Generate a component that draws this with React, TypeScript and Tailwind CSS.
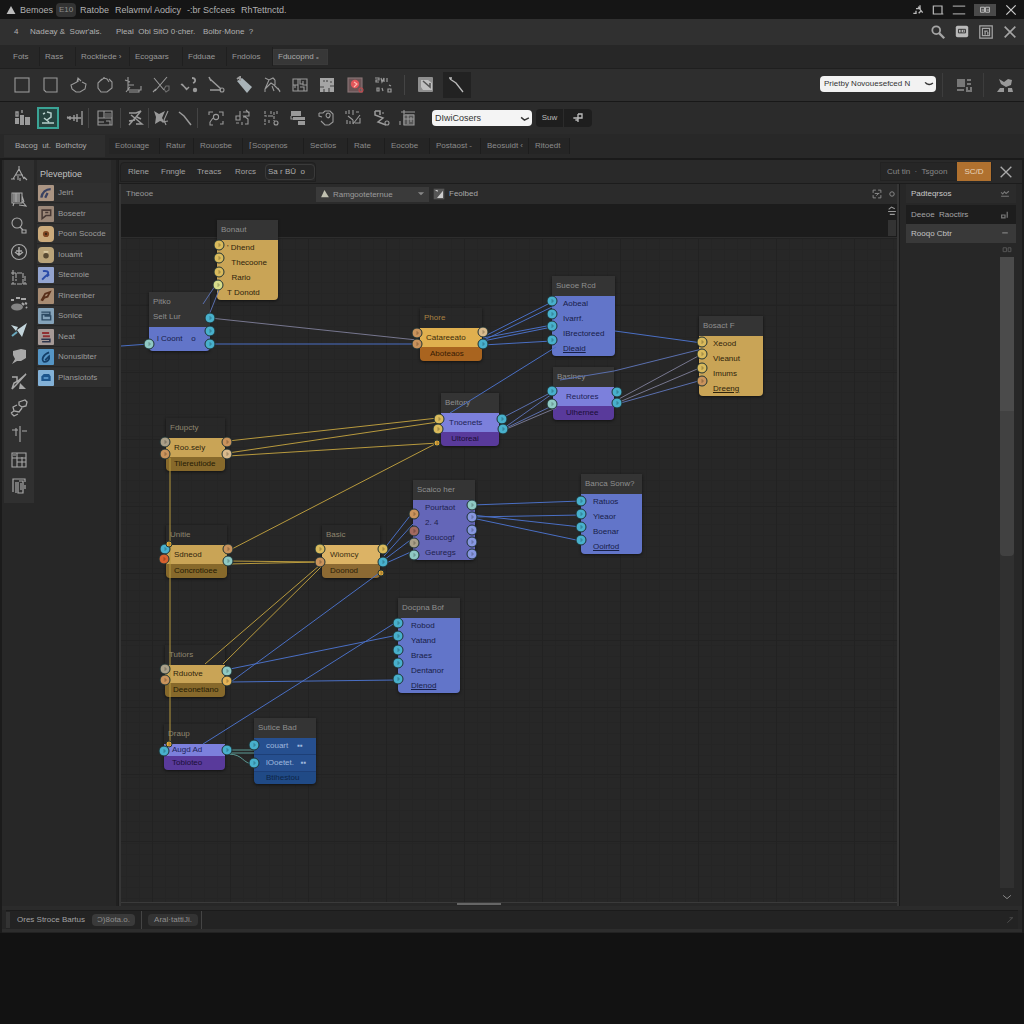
import React from "react";
import type { ReactNode } from "react";

/* ---------- icons ---------- */

function Glyph({ children, className = "size-[18px] text-[#9a9a9a]" }: { children: ReactNode; className?: string }) {
  return (
    <svg viewBox="0 0 18 18" className={className} fill="none" stroke="currentColor" strokeWidth="1.1" aria-hidden="true">
      {children}
    </svg>
  );
}

const f = { fill: "currentColor", stroke: "none" };

const drawTools: { name: string; art: ReactNode }[] = [
  { name: "Rectangle", art: <rect x="2" y="2" width="14" height="14" /> },
  { name: "Page", art: <path d="M3 2h13v14H5l-2-2z" /> },
  { name: "Lasso", art: <path d="M8 6 2 9l1 4 4 3h4l5-3 1-5-4-2M8 6l1-4 3 3M9 2v4" /> },
  { name: "Circle", art: <><path d="M6 3 2 7v5l3 4h6l5-4V6l-3-3M4 5l4-3 3 1 2 3" /><path d="M8 1v2" /></> },
  { name: "Crop", art: <path d="M4 1v13h13v-4M1 4l5 2M4 9h6M2 16l4-5M7 14h8v2H5" /> },
  { name: "Cut", art: <><path d="M2 2l10 12M15 1 3 15M1 16l3-3" /><path d="M14 10h3v4l-3 2-2-3z" opacity=".6" /></> },
  { name: "Curve", art: <><path d="M12 2c4 0 4 4 1 5" strokeWidth="1.8" /><path d="M1 8l6 5 2-2M2 8l5 6" strokeWidth="1.4" /><circle cx="15" cy="14" r="2.2" {...f} /></> },
  { name: "Scissors", art: <><path d="M3 3l11 10M2 1l2 4M3 14h11" strokeWidth="1.6" /><circle cx="15" cy="14" r="2" /></> },
  { name: "Eraser", art: <><path d="M2 5l5-3 10 9-5 6z" fill="#a9b3b8" stroke="none" /><path d="M2 3l3-2v4" strokeWidth="2" /></> },
  { name: "Path", art: <path d="M2 2l4 2 4-2 2 2M6 4l-4 9 6-6 3 2 6 6M2 13v3M12 4v5M9 10l2 5M15 12l2 4" /> },
  { name: "Layout", art: <path d="M2 3h14v12H2zM7 3v12M12 5v4h4M2 9h5M9 3v5h3M9 11h4v4M4 9v3" /> },
  { name: "Table", art: <><rect x="2" y="2" width="14" height="14" fill="#a5a5a5" stroke="none" /><path d="M2 11h4M6 13v3M11 12v4M5 5h2M9 4v2M12 6h2M12 10h4" stroke="#444" /></> },
  { name: "Record", art: <><rect x="2" y="2" width="14" height="14" fill="#6d5557" stroke="#8b7778" /><circle cx="9" cy="8" r="4.2" fill="#e2565a" stroke="none" /><path d="M8 6l3 2-3 3" stroke="#ffb9b0" /><circle cx="15" cy="14" r="2" stroke="#c0484c" /></> },
  { name: "Bitmap", art: <path d="M1 2h4v2H2v2h3M7 2l1 4 2-4v4M13 2v4M3 12h2v3H3zM8 12l1 3M14 13h3v3h-3zM15 9l2 1" strokeWidth="1.2" /> },
];

const editTools: Record<string, ReactNode> = {
  columns: <><path d="M2 9h4v6H2zM7 6h4v10H7zM12 8h5v8h-5z" {...f} /><path d="M3 3h2v4H3zM9 1v3" strokeWidth="1.4" /></>,
  link: <path d="M8 3l4 1v4l-4 3M5 9l5 4M3 14h12M4 5l2-1" stroke="#b7cfcb" strokeWidth="1.5" />,
  align: <path d="M1 9h14M4 7v4M8 6v6M11 5v8M16 2v14M1 8l3 1" strokeWidth="1.4" />,
  window: <><path d="M2 2h14v14H2zM2 9h14M8 2v7M10 12h4v4M2 13h6" /><path d="M9 4h6v4H9z" {...f} opacity=".4" /></>,
  node: <path d="M3 4h7l5-2-5 6-7 8M5 6l5 4 6 5h-6M3 12l6-1M11 8l4 2" strokeWidth="1.5" />,
  star: <><path d="M2 2l5 3 6-3-3 7 3 5-5-2-5 3 1-7z" {...f} /><path d="M16 2l-4 9 2 5M10 13l6-1" /></>,
  slash: <path d="M3 3l5 4 7 9" strokeWidth="1.5" />,
  select: <><path d="M2 6V3h4M12 3h4v4M16 12v3h-3M3 13v3h3" /><circle cx="9" cy="8" r="2.6" /><path d="M6 9l-3 4" /></>,
  refs: <path d="M6 2v9H2V7h4M9 3h6v4h-5l4 3v5h-3M2 14h3M8 13v3M12 1l3 3M9 8h3" />,
  split: <><path d="M3 2v5h3M9 2v4M3 10v6M7 11v4M12 3v9M15 2v3" strokeDasharray="3 1" /><circle cx="14" cy="14" r="2" /><path d="M6 7h5" /></>,
  print: <><path d="M2 2h10v5H2zM4 8h12v3H4zM9 12h7v4H9z" {...f} /><path d="M2 7v3h3" /></>,
  clock: <path d="M2 4h4l2-2h5l3 3v8l-4 3H8l-4-4M2 4v3l3 1M9 6c1-3 5-2 4 1s-4 2-4-1" />,
  measure: <path d="M2 2v3M5 1v4M9 1v5M12 3h3M4 7l5 4M16 6 9 15M3 11v4M6 12v3M9 11v4M11 14h5V9" />,
  route: <><path d="M3 2h5v4M3 2v4l8 3-5 4 8 3" strokeWidth="1.5" /><circle cx="15" cy="14" r="2" /><path d="M11 3v2" /></>,
  grid: <><path d="M4 5h11v11H4z" {...f} opacity=".4" /><path d="M2 3h14M5 1v4M5 6h10v10H5zM5 10h10M9 6v9M12 8v5M1 12v4" /></>,
};

const sideTools: { name: string; art: ReactNode }[] = [
  { name: "Shapes", art: <path d="M9 1v4M9 4 3 14M9 4l5 10M5 10h8M1 14h4M14 12l3 3M8 11v4M10 13v3" /> },
  { name: "Copy", art: <><path d="M3 2h7v9H3z" {...f} opacity=".7" /><path d="M2 2h10v10H2zM6 2v9M4 12l-1 3M12 10l4 5-7-1M12 5l2 6" /></> },
  { name: "Zoom", art: <><circle cx="7" cy="6" r="5" /><path d="M10 10l3 3M12 13h4v3h-4z" /></> },
  { name: "Orbit", art: <><circle cx="9" cy="9" r="7.5" /><path d="M9 4v9M5 9l4 3 4-3M6 8h6" strokeWidth="1.5" /></> },
  { name: "Bounds", art: <path d="M3 1v14h10V4H1M6 4v8M15 7v8M1 15h4M13 15h4" strokeDasharray="5 1" /> },
  { name: "Spray", art: <><ellipse cx="7" cy="12" rx="6" ry="3.5" fill="#858585" stroke="none" /><path d="M1 5h3M6 3h4M11 4h5M15 8l2 1M16 12l1 1M12 8l2 2" strokeWidth="2" /></> },
  { name: "Select", art: <><path d="M1 4l7 2-2 4zM7 9l10-7-5 14z" fill="#c3d5db" stroke="none" /><path d="M2 15l5-4" stroke="#6aa8bd" strokeWidth="2" /></> },
  { name: "Comment", art: <path d="M3 4l8-2 5 1v8l-5 3H7l-5 3 3-5-2-4z" {...f} /> },
  { name: "Brush", art: <><path d="M16 1 6 12l-4 4 2-6 4-2zM2 4h5v4" strokeWidth="1.5" /><path d="M10 10l6 6h-7z" {...f} /></> },
  { name: "Chain", art: <path d="M9 3l6-2 2 2-1 4-4 1-3-2zM7 6 3 8l1 4 5 1 3-4M1 14l3 3 4-2M4 12l-3 2" strokeWidth="1.3" /> },
  { name: "Center", art: <path d="M10 1v16M2 5h6M12 6h5M6 3v8" /> },
  { name: "Grid", art: <path d="M2 2h14v14H2zM2 7h14M7 2v14M12 6v10M7 11h9M3 4h3" /> },
  { name: "Device", art: <path d="M3 15V2h12v3M6 5v11M9 4h4v12H8V5M15 8v4M3 2v6M11 6v7" strokeWidth="1.2" /> },
];

/* ---------- small parts ---------- */

function IconButton({ label, children, className = "" }: { label: string; children: ReactNode; className?: string }) {
  return (
    <button type="button" aria-label={label} className={`flex items-center justify-center ${className}`}>
      {children}
    </button>
  );
}

const Rule = () => <span className="h-5 w-px bg-[#444]" />;

function TitleBar() {
  return (
    <header className="flex h-[19px] items-center bg-[#151515] px-1.5 text-[9px] text-[#b0b0b0]">
      <Glyph className="size-2.5 text-[#bdbdbd]"><path d="M9 2l8 14H1z" {...f} /></Glyph>
      <span className="ml-1 w-9">Bemoes</span>
      <span className="flex h-3.5 w-5 items-center justify-center rounded-sm bg-[#333] text-[8px] text-[#8d8d8d]">E10</span>
      <h1 className="ml-1 flex gap-1.5 whitespace-nowrap">
        <span>Ratobe</span><span>Relavmvl Aodicy</span><span>-:br Scfcees</span><span>RhTettnctd.</span>
      </h1>
      <div className="ml-auto flex items-center gap-2 text-[#bbb]">
        <IconButton label="Pin"><Glyph className="size-3"><path d="M2 14h4v-4M9 4l4 3M12 2v6l4 5M10 14l3-3M6 7h5" strokeWidth="2" /></Glyph></IconButton>
        <IconButton label="Restore"><Glyph className="size-3"><path d="M2 3h13v12H2zM12 15h5" strokeWidth="1.8" /></Glyph></IconButton>
        <IconButton label="Minimize"><Glyph className="size-3.5 text-[#999]"><path d="M1 4h16M1 14h16" strokeWidth="1.6" /></Glyph></IconButton>
        <IconButton label="Layout" className="h-3 w-[22px] bg-[#4a4a4a]"><Glyph className="h-2.5 w-3.5 text-[#bbb]"><path d="M1 4h7v9H1zM10 4h7v9h-7zM3 9h4M12 9h4" strokeWidth="1.8" /></Glyph></IconButton>
        <IconButton label="Close"><Glyph className="size-3.5 text-[#ccc]"><path d="M3 3l12 12M15 3L3 15" strokeWidth="1.6" /></Glyph></IconButton>
      </div>
    </header>
  );
}

function MenuBar() {
  return (
    <div className="flex h-[26px] items-center bg-[#303030] pr-1.5 pl-3.5 text-[8px] text-[#b0b0b0]">
      <span className="w-4">4</span>
      <nav className="flex whitespace-nowrap">
        <a href="#nodes" className="w-[86px]">Nadeay &amp; &nbsp;Sowr'als.</a>
        <a href="#panel" className="w-[87px]">Pleal &nbsp;Obi SitO 0·cher.</a>
        <a href="#mode">Bolbr·Mone &nbsp;?</a>
      </nav>
      <div className="ml-auto flex items-center gap-2">
        <IconButton label="Search"><Glyph className="size-4 text-[#a5a5a5]"><circle cx="7" cy="7" r="4.4" strokeWidth="2" /><path d="M10 10l6 6" strokeWidth="2.6" /></Glyph></IconButton>
        <IconButton label="Card"><Glyph className="size-4 text-[#b9b9b9]"><rect x="2" y="2" width="14" height="13" rx="2" {...f} /><path d="M5 6h8v4H5zM8 6v4M11 7v2" stroke="#333" /></Glyph></IconButton>
        <IconButton label="Frame"><Glyph className="size-4 text-[#a5a5a5]"><path d="M2 2h14v14H2zM5 5h8v8H5zM7 8h4M8 8v4M11 9v3" strokeWidth="1.4" /></Glyph></IconButton>
        <IconButton label="Close panel"><Glyph className="size-4 text-[#a5a5a5]"><path d="M3 3l12 12M15 3L3 15" strokeWidth="1.8" /></Glyph></IconButton>
      </div>
    </div>
  );
}

function MainTabs() {
  const tabs = [
    ["Fots", "w-8"], ["Rass", "w-9"], ["Rocktiede ›", "w-[54px]"], ["Ecogaars", "w-[53px]"],
    ["Fdduae", "w-11"], ["Fndoios", "w-[46px]"],
  ];
  return (
    <nav className="flex h-[23px] items-center bg-[#272727] pl-2 text-[8px] text-[#999]">
      {tabs.map(([t, w]) => (
        <button key={t} type="button" className={`${w} h-[19px] border-r border-[#1f1f1f] pl-[5px] text-left whitespace-nowrap`}>{t}</button>
      ))}
      <button type="button" className="h-4 w-[55px] border border-[#3a3a3a] bg-[#373737] pl-1 text-left text-[#aaa]">Fducopnd ₌</button>
    </nav>
  );
}

function DrawBar() {
  return (
    <div className="flex h-[34px] items-center border-y border-t-[#1f1f1f] border-b-[#181818] bg-[#2e2e2e]">
      <div className="ml-[13px] flex w-[379px] justify-between">
        {drawTools.map((t) => (
          <IconButton key={t.name} label={t.name}><Glyph>{t.art}</Glyph></IconButton>
        ))}
      </div>
      <span className="ml-3 h-5 w-px bg-[#444]" />
      <IconButton label="Shade" className="ml-3"><Glyph><rect x="1" y="1" width="15" height="15" rx="1" fill="#8f8f8f" stroke="none" /><path d="M4 4h7l4 3v7H6L4 11z" fill="#c0c0c0" stroke="none" /><path d="M6 5l7 6V7" stroke="#555" strokeWidth="1.6" /></Glyph></IconButton>
      <IconButton label="Line" className="ml-2 h-[26px] w-7 bg-[#222]"><Glyph className="size-[18px] text-[#bbb]"><path d="M2 3l6 4 7 9M1 2h3" strokeWidth="1.3" /></Glyph></IconButton>
      <label className="relative mt-1.5 ml-auto block self-start">
        <span className="sr-only">Preset</span>
        <select className="h-4 w-[116px] appearance-none rounded bg-[#f2f2f2] pr-3 pl-1 text-[8px] leading-4 text-[#333]">
          <option>Prietby Novouesefced N</option>
        </select>
        <Glyph className="pointer-events-none absolute top-1 right-0.5 size-2.5 text-[#333]"><path d="M2 6c4 5 10 5 14 1" strokeWidth="2.6" /></Glyph>
      </label>
      <span className="ml-1.5 h-6 w-px bg-[#3d3d3d]" />
      <IconButton label="Tiles" className="ml-3"><Glyph className="size-[18px] text-[#777]"><path d="M2 3h8v8H2z" {...f} /><path d="M12 4h4M12 8h4M2 14h7M12 11v4h4v-4" strokeWidth="2" /></Glyph></IconButton>
      <span className="ml-2.5 h-6 w-px bg-[#3d3d3d]" />
      <IconButton label="Users" className="mr-2.5 ml-3"><Glyph className="size-[18px] text-[#999]"><path d="M3 3l5 3 4-3 4 1-1 5-5 2-5-3zM1 16l3-4h4v4zM12 12h4l1 4h-5z" {...f} /></Glyph></IconButton>
    </div>
  );
}

function EditBar() {
  const tool = (id: string, cls = "w-[27px]") => (
    <IconButton key={id} label={id} className={cls}><Glyph>{editTools[id]}</Glyph></IconButton>
  );
  return (
    <div className="flex h-8 items-center bg-[#2b2b2b] pl-2">
      {tool("columns")}
      <IconButton label="link" className="mx-0.5 h-[22px] w-[22px] border-2 border-[#3aa395] bg-[#26433f]"><Glyph>{editTools.link}</Glyph></IconButton>
      {tool("align")}
      <Rule />
      {tool("window", "w-[31px]")}
      <Rule />
      {tool("node")}
      <Rule />
      {tool("star", "w-6")}
      {tool("slash", "w-6")}
      <Rule />
      <div className="ml-1 flex w-[220px] justify-between">
        {["select", "refs", "split", "print", "clock", "measure", "route", "grid"].map((id) => tool(id))}
      </div>
      <label className="relative ml-2.5 block">
        <span className="sr-only">Composer</span>
        <select className="block h-4 w-[100px] appearance-none rounded-sm bg-[#f4f4f4] pr-3 pl-[3px] text-[9px] leading-4 text-[#333]">
          <option>DIwiCosers</option>
        </select>
        <Glyph className="pointer-events-none absolute top-1 right-0.5 size-2.5 text-[#333]"><path d="M2 6l6 5 8-4" strokeWidth="2.6" /></Glyph>
      </label>
      <div className="ml-1 flex h-[18px] overflow-hidden rounded bg-[#1e1e1e] text-[8px] text-[#bbb]">
        <button type="button" className="w-7 border-r border-[#2b2b2b]">Suw</button>
        <IconButton label="Branch" className="w-7"><Glyph className="size-3 text-[#bbb]"><path d="M2 9h14M9 3v12M9 3h6v6M5 12h4" strokeWidth="2" /></Glyph></IconButton>
      </div>
    </div>
  );
}

function SubTabs() {
  const tabs = [
    ["Eotouage", "w-[51px]"], ["Ratur", "w-[34px]"], ["Rouosbe", "w-[49px]"], ["⌈Scopenos", "w-[61px]"], ["Sectios", "w-11"],
    ["Rate", "w-[37px]"], ["Eocobe", "w-[45px]"], ["Postaost -", "w-[51px]"], ["Beosuidt ‹", "w-12"], ["Ritoedt", "w-[41px]"],
  ];
  return (
    <nav className="flex h-6 items-center bg-[#282828] pl-1 text-[8px] text-[#8c8c8c]">
      <button type="button" className="h-[22px] w-[101px] bg-[#2e2e2e] pl-[11px] text-left text-[#a8a8a8]">Bacog &nbsp;ut. &nbsp;Bothctoy</button>
      <div className="ml-1 flex">
        {tabs.map(([t, w]) => (
          <button key={t} type="button" className={`${w} h-4 border-r border-[#1d1d1d] bg-[#252525] pl-1.5 text-left whitespace-nowrap`}>{t}</button>
        ))}
      </div>
    </nav>
  );
}

/* ---------- left side ---------- */

const palette: { label: string; bg: string; round?: boolean; art: ReactNode }[] = [
  { label: "Jeirt", bg: "bg-[#b9a08c]", art: <path d="M3 15c1-7 6-11 12-11M8 15l3-6" stroke="#3a4468" strokeWidth="3" /> },
  { label: "Boseetr", bg: "bg-[#a89282]", art: <path d="M4 4h11v7H9l-5 4zM8 7h4" stroke="#4b3b36" strokeWidth="2" /> },
  { label: "Poon Scocde", bg: "bg-[#dcb884]", round: true, art: <><circle cx="9" cy="9" r="4" fill="#8a4a20" stroke="none" /><circle cx="9" cy="9" r="1.5" fill="#3c2415" stroke="none" /></> },
  { label: "Iouamt", bg: "bg-[#c9b182]", round: true, art: <><circle cx="9" cy="10" r="3.5" fill="#5c4c33" stroke="none" /><path d="M6 5h6" stroke="#f0dfb4" strokeWidth="2" /></> },
  { label: "Stecnoie", bg: "bg-[#9fb2e2]", art: <path d="M5 4c8-1 9 3 3 7l-4 4M10 11l3-3" stroke="#2b4fb5" strokeWidth="2.5" /> },
  { label: "Rineenber", bg: "bg-[#b5967b]", art: <path d="M3 15l5-9 6-2-3 6-4 1-3 4" stroke="#5d2f18" strokeWidth="2.4" /> },
  { label: "Sonice", bg: "bg-[#8fb0c9]", art: <path d="M3 4h11v3H4v7h11V9H7" stroke="#2c4c68" strokeWidth="1.8" /> },
  { label: "Neat", bg: "bg-[#b3a6a3]", art: <><path d="M4 4h9M5 8h9" stroke="#9a3034" strokeWidth="2.6" /><path d="M3 12h11v3H4" stroke="#2d3550" strokeWidth="2" /></> },
  { label: "Nonusibter", bg: "bg-[#5aa0d6]", art: <path d="M13 3C5 6 3 12 6 15c5 1 8-3 7-7l-5 5" stroke="#12406e" strokeWidth="2.2" /> },
  { label: "Plansiotofs", bg: "bg-[#8cc0ea]", art: <><path d="M3 7l3-3h7l2 3v6H3z" fill="#1c5a96" stroke="none" /><path d="M6 9h6" stroke="#6db0ea" strokeWidth="2" /></> },
];

function ToolStrip() {
  return (
    <aside className="w-[30px] shrink-0 self-start bg-[#303030] pt-px pb-1">
      {sideTools.map((t) => (
        <IconButton key={t.name} label={t.name} className="h-[26px] w-full"><Glyph className="size-[18px] text-[#a8a8a8]">{t.art}</Glyph></IconButton>
      ))}
    </aside>
  );
}

function Palette() {
  return (
    <aside className="mx-[3px] w-[74px] shrink-0 self-start bg-[#2d2d2d]">
      <h2 className="flex h-[23px] items-center pt-1 pl-[3px] text-[9px] text-[#c0c0c0]">Pleveptioe</h2>
      {palette.map((p) => (
        <button key={p.label} type="button" className="flex h-5 w-full items-center gap-1 border-b border-[#252525] bg-[#303030] pl-px text-[8px] whitespace-nowrap text-[#9c9c9c] odd:mt-px">
          <span className={`${p.bg} ${p.round ? "rounded" : "rounded-[1px]"} flex size-4 items-center justify-center opacity-90`}>
            <Glyph className="size-3.5">{p.art}</Glyph>
          </span>
          {p.label}
        </button>
      ))}
    </aside>
  );
}

/* ---------- node canvas ---------- */

// Board coordinates are measured from the window corner; the canvas starts here.
const ORIGIN = { x: 121, y: 204 };

type Part = { h: string; tone: string; rows: string[] };
type NodeSpec = { x: number; y: number; w: string; pad: string; head: string[]; headH?: string; headTone?: string; parts: Part[] };

const YEL = "bg-[#c9a456] text-[#2e230c]";
const DYEL = "bg-[#87692b] text-[#241a05]";
const BLU = "bg-[#6275c9] text-[#182048]";
const LIL = "bg-[#7c80dc] text-[#1d1f55]";
const PUR = "bg-[#593a9b] text-[#1a0e36]";
const BARE = "bg-[#2a2a2a]/60 text-[#8f866f]";

const nodes: NodeSpec[] = [
  { x: 217, y: 220, w: "w-[61px]", pad: "pl-2.5", head: ["Bonaut"], parts: [{ h: "h-[15px]", tone: YEL, rows: ["' Dhend", "  Thecoone", "  Rario", "T Donotd"] }] },
  { x: 149, y: 292, w: "w-[61px]", pad: "pl-2", head: ["Pitko", "Selt Lur"], headH: "h-[35px]", parts: [{ h: "h-6", tone: BLU, rows: ["l Coont    o"] }] },
  { x: 420, y: 308, w: "w-[62px]", pad: "pl-1.5", head: ["Phore"], headTone: "bg-[#2a2a2a]/60 text-[#a98242]", parts: [{ h: "h-[19px]", tone: "bg-[#e0b04f] text-[#3c2a0a]", rows: ["Catareeato"] }, { h: "h-3.5", tone: "bg-[#a9641f] text-[#381b04]", rows: ["  Aboteaos"] }] },
  { x: 552, y: 276, w: "w-[63px]", pad: "pl-[11px]", head: ["Sueoe Rcd"], parts: [{ h: "h-[15px]", tone: BLU, rows: ["Aobeal", "Ivarrf.", "IBrectoreed", "_Dleaid"] }] },
  { x: 553, y: 367, w: "w-[61px]", pad: "pl-[13px]", head: ["Basiney"], parts: [{ h: "h-[19px]", tone: LIL, rows: ["Reutores"] }, { h: "h-3.5", tone: PUR, rows: ["Ulhernee"] }] },
  { x: 699, y: 316, w: "w-16", pad: "pl-3.5", head: ["Bosact F"], parts: [{ h: "h-[15px]", tone: YEL, rows: ["Xeood", "Vieanut", "Imums", "_Dreeng"] }] },
  { x: 441, y: 393, w: "w-[58px]", pad: "pl-2", head: ["Beitory"], parts: [{ h: "h-[19px]", tone: LIL, rows: ["Tnoenets"] }, { h: "h-3.5", tone: PUR, rows: [" Ultoreai"] }] },
  { x: 166, y: 418, w: "w-[59px]", pad: "pl-2", head: ["Fdupcty"], headTone: BARE, parts: [{ h: "h-[19px]", tone: YEL, rows: ["Roo.seiy"] }, { h: "h-3.5", tone: DYEL, rows: ["Tilereutiode"] }] },
  { x: 166, y: 525, w: "w-[61px]", pad: "pl-2", head: ["Unitie"], headTone: BARE, parts: [{ h: "h-[19px]", tone: YEL, rows: ["Sdneod"] }, { h: "h-3.5", tone: DYEL, rows: ["Concrotioee"] }] },
  { x: 322, y: 525, w: "w-[58px]", pad: "pl-2", head: ["Basic"], headTone: BARE, parts: [{ h: "h-[19px]", tone: "bg-[#dcb365] text-[#3a2d12]", rows: ["Wiomcy"] }, { h: "h-3.5", tone: "bg-[#8d6a33] text-[#2c2009]", rows: ["Doonod"] }] },
  { x: 413, y: 480, w: "w-[62px]", pad: "pl-3", head: ["Scaico her"], parts: [{ h: "h-[15px]", tone: "bg-[#6466b8] text-[#1e1f4d]", rows: ["Pourtaot", "2. 4", "Boucogf", "Geuregs"] }] },
  { x: 581, y: 474, w: "w-[61px]", pad: "pl-3", head: ["Banca Sonw?"], parts: [{ h: "h-[15px]", tone: BLU, rows: ["Ratuos", "Yieaor", "Boenar", "_Ooirfod"] }] },
  { x: 398, y: 598, w: "w-[62px]", pad: "pl-[13px]", head: ["Docpna Bof"], parts: [{ h: "h-[15px]", tone: BLU, rows: ["Robod", "Yatand", "Braes", "Dentanor", "_Dlenod"] }] },
  { x: 165, y: 645, w: "w-[60px]", pad: "pl-2", head: ["Tutiors"], headTone: BARE, parts: [{ h: "h-[18px]", tone: YEL, rows: ["Rduotve"] }, { h: "h-3.5", tone: DYEL, rows: ["Deeonetiano"] }] },
  { x: 164, y: 724, w: "w-[61px]", pad: "pl-2", head: ["Draup"], headTone: BARE, parts: [{ h: "h-3", tone: LIL, rows: ["Augd Ad"] }, { h: "h-3.5", tone: PUR, rows: ["Tobioteo"] }] },
  { x: 254, y: 718, w: "w-[62px]", pad: "pl-3", head: ["Sutice Bad"], parts: [{ h: "h-[17px]", tone: "bg-[#264f8f] text-[#9fb8de] border-b border-[#1d3f77]", rows: ["couart    ▪▪", "lOoetet.   ▪▪"] }, { h: "h-3", tone: "bg-[#204a86] text-[#0d2547]", rows: ["Btihestou"] }] },
];

function GraphNode({ node }: { node: NodeSpec }) {
  return (
    <section
      className={`absolute ${node.w} overflow-hidden rounded-b-sm text-[8px] whitespace-nowrap shadow-[0_1px_3px_#111]`}
      style={{ left: node.x - ORIGIN.x, top: node.y - ORIGIN.y }}
    >
      <h3 className={`flex flex-col justify-evenly pl-1 leading-3 ${node.headH ?? "h-5"} ${node.headTone ?? "bg-[#343434] text-[#8f8f8f]"}`}>
        {node.head.map((line) => <span key={line}>{line}</span>)}
      </h3>
      {node.parts.map((part, i) => (
        <ul key={i}>
          {part.rows.map((row) => (
            <li key={row} className={`flex items-center whitespace-pre ${node.pad} ${part.h} ${part.tone}`}>
              {row.startsWith("_") ? <span className="underline">{row.slice(1)}</span> : row}
            </li>
          ))}
        </ul>
      ))}
    </section>
  );
}

const wires: { color: string; d: string[] }[] = [
  { color: "#4a6fc4", d: [
    "M121 346L149 344", "M210 344H417", "M483 337L552 302", "M484 340L554 306", "M483 341L552 327", "M483 338L552 325",
    "M483 345L552 341", "M615 331L702 343", "M450 413L556 347",
    "M472 505L581 501", "M472 517L581 515", "M472 515L581 527", "M472 518L581 541",
    "M384 549L413 512", "M384 556L413 524", "M384 560L413 538", "M384 564L413 551",
    "M232 681L382 571", "M230 669L398 635", "M230 682L398 680", "M203 744L398 621",
  ] },
  { color: "#5a6fae", d: ["M502 418L552 392", "M504 428L552 394", "M504 429L552 406", "M560 380L614 371L702 349", "M617 404L702 380", "M203 304L217 283", "M209 315L219 290"] },
  { color: "#77778f", d: ["M210 318L417 340", "M617 400L702 354", "M617 403L702 367", "M504 430L556 408"] },
  { color: "#b89a3e", d: [
    "M228 441L438 418", "M228 453L438 422", "M228 456L438 443", "M228 551L437 443", "M228 561L320 562", "M228 564L320 562",
    "M320 565L205 664", "M321 567L223 664", "M170 458V745",
  ] },
  { color: "#5c9a94", d: ["M228 750H254", "M228 753H254", "M228 754C244 754 242 764 254 764"] },
];

const ports: { fill: string; r?: number; at: [number, number][] }[] = [
  { fill: "#d9ba5c", at: [[219, 245], [219, 258], [219, 272], [702, 342], [702, 354], [702, 368], [439, 419], [438, 429], [320, 549], [383, 549]] },
  { fill: "#d6dc8a", at: [[218, 285]] },
  { fill: "#c9935c", at: [[417, 333], [417, 344], [702, 381], [165, 454], [227, 442], [320, 562], [414, 514], [165, 680], [228, 549]] },
  { fill: "#48b0cc", at: [[210, 318], [210, 331], [210, 344], [483, 344], [552, 301], [552, 314], [552, 326], [552, 340], [552, 391], [617, 392], [617, 403], [502, 419], [503, 429], [383, 562], [581, 501], [581, 514], [581, 527], [581, 540], [398, 623], [398, 636], [398, 650], [398, 663], [398, 679], [164, 751], [227, 750], [254, 745], [254, 763], [165, 549]] },
  { fill: "#8fc9c4", at: [[149, 344], [552, 404], [228, 561], [227, 671], [472, 505], [414, 555]] },
  { fill: "#a99f88", at: [[165, 442], [414, 543], [165, 669]] },
  { fill: "#d9ba8c", at: [[227, 454], [483, 332]] },
  { fill: "#e5b457", at: [[227, 681]] },
  { fill: "#8797e0", at: [[472, 517], [472, 530], [472, 542], [472, 554]] },
  { fill: "#d8602e", at: [[164, 559]] },
  { fill: "#a2695f", at: [[414, 531]] },
  { fill: "#e0a83c", r: 3, at: [[437, 443], [169, 544], [381, 573], [169, 744]] },
];

function Board() {
  return (
    <div className="relative min-h-[698px] flex-1 overflow-hidden bg-[#272727] bg-[linear-gradient(#222_1px,transparent_1px),linear-gradient(90deg,#222_1px,transparent_1px),linear-gradient(#252525_1px,transparent_1px),linear-gradient(90deg,#252525_1px,transparent_1px)] bg-[size:78px_67px,78px_67px,13px_11px,13px_11px] bg-[position:31px_34px]">
      <div className="h-[34px] border-b border-[#2d2d2d] bg-[#1c1c1c]" />
      <div className="absolute top-0.5 right-0 flex flex-col items-center gap-1">
        <Glyph className="size-2.5 text-[#999]"><path d="M3 6l5-4 6 3M2 10h14M5 15h9" strokeWidth="2" /></Glyph>
        <span className="h-4 w-2 bg-[#333]" />
      </div>
      {nodes.map((n) => <GraphNode key={`${n.x}-${n.y}`} node={n} />)}
      <svg className="pointer-events-none absolute inset-0 size-full" fill="none" aria-hidden="true">
        <g transform={`translate(${-ORIGIN.x} ${-ORIGIN.y})`}>
          {wires.map((w) => (
            <path key={w.color} d={w.d.join("")} stroke={w.color} strokeWidth="1" />
          ))}
          {ports.map((p) => p.at.map(([x, y]) => (
            <g key={`${x}-${y}`}>
              <circle cx={x} cy={y} r={p.r ?? 5} fill={p.fill} stroke="#1f3234" strokeWidth="1" />
              <path d={`M${x - 1} ${y - 1}h2v2h-2`} stroke="#000" strokeOpacity=".3" strokeWidth=".8" />
            </g>
          )))}
        </g>
      </svg>
    </div>
  );
}

function BoardHeader() {
  return (
    <div className="flex h-5 items-center bg-[#2b2b2b] text-[8px] text-[#999]">
      <span className="w-[195px] pl-[5px]">Theooe</span>
      <label className="relative flex h-[15px] w-[113px] items-center bg-[#3a3a3a] pl-1">
        <span className="sr-only">Graph</span>
        <Glyph className="size-2.5 text-[#c0c0b0]"><path d="M8 2l8 13H2z" {...f} /></Glyph>
        <select className="h-[15px] min-w-0 flex-1 appearance-none bg-transparent pr-3 pl-[3px] text-[8px] leading-[15px] text-[#9c9c9c]"><option>Ramgooteternue</option></select>
        <Glyph className="pointer-events-none absolute right-1 size-2 text-[#888]"><path d="M2 5h14l-7 7z" {...f} /></Glyph>
      </label>
      <button type="button" className="ml-1 flex items-center gap-1 text-[#a8a8a8]">
        <Glyph className="size-3 text-[#999]"><path d="M1 1h16v16H1z" fill="#555" stroke="none" /><path d="M15 4v11H6zM3 3h4v3" fill="#ccc" stroke="none" /></Glyph>
        Feolbed
      </button>
      <div className="ml-auto flex gap-1.5 pr-px">
        <IconButton label="Expand"><Glyph className="size-2.5 text-[#888]"><path d="M2 7V2h5M11 2h5v5M2 11v5h5M16 11v5h-5M5 8h8M8 12l5-5" strokeWidth="1.8" /></Glyph></IconButton>
        <IconButton label="Options"><Glyph className="size-2 text-[#888]"><circle cx="9" cy="9" r="5" strokeWidth="2.2" /></Glyph></IconButton>
      </div>
    </div>
  );
}

/* ---------- right side ---------- */

function Inspector() {
  const row = "flex items-center justify-between pr-1.5 pl-[5px] h-[19px]";
  return (
    <aside className="mx-1.5 flex w-[110px] shrink-0 flex-col text-[8px] text-[#a5a5a5]">
      <h2 className={`${row} bg-[#2b2b2b] text-[#cacaca]`}>Padteqrsos<Glyph className="size-2.5 text-[#777]"><path d="M2 6l3 3 3-4 3 3 5-4M2 13h14" strokeWidth="2" /></Glyph></h2>
      <button type="button" className={`${row} mt-0.5 bg-[#1d1d1d]`}>Deeoe&nbsp; Raoctirs<Glyph className="size-2.5 text-[#777]"><path d="M3 9h6v5H3zM13 3v11" strokeWidth="2.2" /></Glyph></button>
      <button type="button" className={`${row} bg-[#393939] text-[#c4c4c4]`}>Rooqo Cbtr<Glyph className="size-2.5 text-[#888]"><path d="M4 7h10" strokeWidth="2" /></Glyph></button>
      <div className="flex flex-1 flex-col items-center self-end pr-0.5">
        <Glyph className="my-0.5 size-2.5 text-[#555]"><path d="M2 5h6v7H2zM11 5h5v7h-5z" strokeWidth="1.8" /></Glyph>
        <div className="flex w-3.5 flex-1 flex-col bg-[#303030]">
          <div className="h-[154px] bg-[#4b4b4b]" />
          <div className="h-[145px] rounded-b-sm bg-[#414141]" />
        </div>
        <Glyph className="my-1 size-2.5 text-[#888]"><path d="M2 6l7 6 7-6" strokeWidth="1.8" /></Glyph>
      </div>
    </aside>
  );
}

function Workspace() {
  return (
    <div className="flex min-w-0 flex-1 flex-col border-l border-[#1c1c1c]">
      <div className="flex h-[23px] items-center bg-[#292929] text-[8px] text-[#a2a2a2]">
        <nav className="ml-px flex h-5 items-center rounded-t-sm border border-[#1f1f1f] bg-[#262626] pl-[7px]">
          <button type="button" className="w-[33px] text-left">Rlene</button>
          <button type="button" className="w-9 text-left">Fnngle</button>
          <button type="button" className="w-[38px] text-left">Treacs</button>
          <button type="button" className="w-[30px] text-left">Rorcs</button>
          <button type="button" className="h-4 w-[50px] rounded-sm border border-[#3a3a3a] pl-0.5 text-left text-[#adadad]">Sa r BŪ &nbsp;o</button>
        </nav>
        <div className="ml-auto flex h-[19px] items-center border border-[#222] bg-[#262626] pl-1.5 text-[#888]">
          <span className="w-[70px] whitespace-nowrap">Cut tin &nbsp;·&nbsp; Tsgoon</span>
          <button type="button" className="h-[19px] w-[34px] bg-[#b0712f] text-[#e8d5bd]">SC/D</button>
        </div>
        <IconButton label="Close workspace" className="mr-2 ml-1.5"><Glyph className="size-4 text-[#aaa]"><path d="M3 3l12 12M15 3L3 15" strokeWidth="1.5" /></Glyph></IconButton>
      </div>
      <div className="flex flex-1 border-t border-[#1c1c1c]">
        <main className="flex min-w-0 flex-1 flex-col border-x-2 border-x-[#363636]">
          <BoardHeader />
          <Board />
          <div className="flex h-1 justify-center border-t border-[#3a3a3a]"><span className="mr-[60px] h-0.5 w-11 bg-[#666]" /></div>
        </main>
        <div className="w-px bg-[#1a1a1a]" />
        <Inspector />
      </div>
    </div>
  );
}

function StatusBar() {
  return (
    <footer className="mx-1 flex h-[19px] items-center border-t border-[#1b1b1b] bg-[#232323] text-[8px] text-[#a2a2a2]">
      <span className="h-4 w-1 bg-[#333]" />
      <span className="w-[82px] pl-[7px] whitespace-nowrap">Ores Stroce Bartus</span>
      <button type="button" className="h-3 w-[43px] rounded-sm bg-[#3a3a3a] text-[#8f8f8f]">Ɔ)8ota.o.</button>
      <span className="mx-1.5 h-full w-px bg-[#444]" />
      <button type="button" className="h-3 w-[50px] rounded-sm bg-[#333] text-[#8f8f8f]">Aral·tattiJi.</button>
      <span className="ml-[3px] h-full w-px bg-[#444]" />
      <Glyph className="mr-1 ml-auto size-2 text-[#777]"><path d="M3 15 15 4M8 4h7" /></Glyph>
    </footer>
  );
}

export default function App() {
  return (
    <div className="flex min-h-screen flex-col bg-[#121212] font-['Liberation_Sans',Arial,sans-serif] leading-3">
      <TitleBar />
      <MenuBar />
      <MainTabs />
      <DrawBar />
      <EditBar />
      <SubTabs />
      <div className="flex flex-1 flex-col border-x-2 border-x-[#1b1b1b] bg-[#262626]">
        <div className="flex flex-1 border-t-2 border-[#1a1a1a] bg-[#272727] pl-0.5">
          <ToolStrip />
          <Palette />
          <div className="ml-0.5 w-0.5 bg-[#202020]" />
          <Workspace />
        </div>
        <div className="h-1 bg-[#2b2b2b]" />
        <StatusBar />
        <div className="h-1 border-b border-[#222] bg-[#2d2d2d]" />
      </div>
      <div className="h-[91px] shrink-0 bg-[#121212]" />
    </div>
  );
}
